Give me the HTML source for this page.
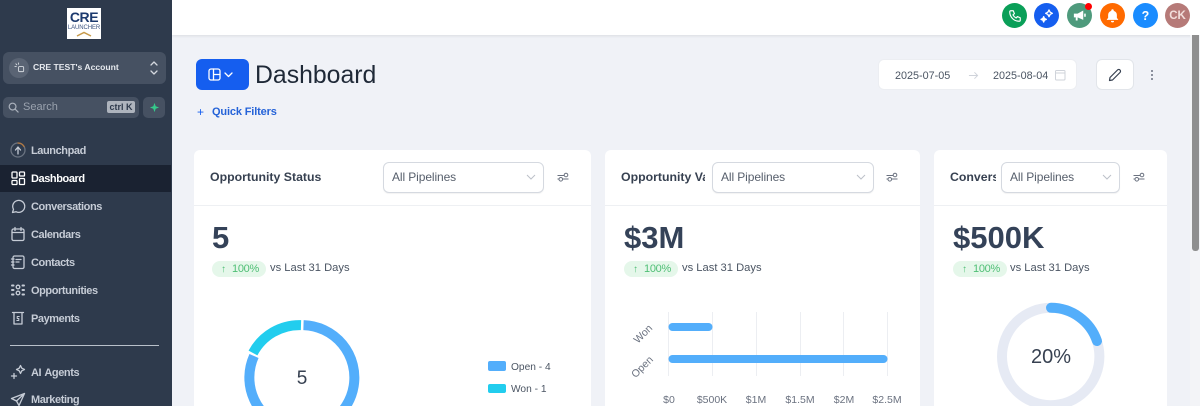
<!DOCTYPE html>
<html><head><meta charset="utf-8"><style>
*{box-sizing:border-box}
html{margin:0;padding:0;width:1200px;height:406px;overflow:hidden}
body{margin:0;padding:0;width:1200px;height:406px;overflow:hidden;position:relative;background:#f0f2f7;font-family:"Liberation Sans",sans-serif;color:#374151}
#wrap{position:absolute;left:0;top:0;width:1200px;height:406px;overflow:hidden;filter:blur(.3px)}
.a{position:absolute;white-space:nowrap}
#side{left:0;top:0;width:172px;height:406px;background:#2e3a4c;overflow:hidden}
.nav{position:absolute;left:31px;font-size:11px;font-weight:700;color:#c6ccd6;line-height:14px;letter-spacing:-.42px;word-spacing:1px}
.ic{position:absolute;left:10px;width:16px;height:16px;fill:none;stroke:#c6ccd6;stroke-width:1.3;stroke-linecap:round;stroke-linejoin:round}
.card{position:absolute;top:150px;height:256px;background:#fff;border-radius:6px 6px 0 0}
.hl{position:absolute;left:0;right:0;top:55px;height:1px;background:#eef0f3}
.ttl{position:absolute;top:20px;font-size:12.3px;font-weight:700;color:#374151;line-height:15px;overflow:hidden;white-space:nowrap}
.sel{position:absolute;top:12px;height:31px;background:#fff;border:1px solid #d5d9e0;border-radius:6px;font-size:12px;letter-spacing:-.1px;color:#565e6b;line-height:29px;padding-left:8px;box-shadow:0 1px 1px rgba(0,0,0,.05)}
.sel svg{position:absolute;right:7px;top:11px}
.cfg{position:absolute;top:21px}
.big{position:absolute;top:71px;font-size:31px;line-height:34px;font-weight:700;color:#344258}
.pill{position:absolute;top:111px;width:54px;height:16px;border-radius:8px;background:#e5f7ea;color:#4fbf75;font-size:11px;letter-spacing:-.3px;line-height:16px;padding-left:9px;white-space:nowrap}
.pill span{font-size:10px;display:inline-block;width:11px}
.vs{position:absolute;top:112px;font-size:11.2px;line-height:13px;color:#4b5563;white-space:nowrap}
.circ{position:absolute;top:3px;width:25px;height:25px;border-radius:50%;display:flex;align-items:center;justify-content:center}
.ax{position:absolute;top:395px;font-size:10.5px;color:#6b7280;line-height:11px;transform:translateX(-50%);white-space:nowrap}
</style></head><body><div id="wrap">

<!-- top bar -->
<div class="a" style="left:172px;top:0;width:1028px;height:35px;background:#fff;box-shadow:0 1px 3px rgba(0,0,0,.09)"></div>
<div class="circ" style="left:1002px;background:#0a9f58"><svg width="14" height="14" viewBox="0 0 24 24" fill="none" stroke="#fff" stroke-width="2" stroke-linecap="round" stroke-linejoin="round"><path d="M5 3h4l2 5-2.500 2a13 13 0 0 0 5.500 5.500L16 13l5 2v4a2 2 0 0 1-2 2A16 16 0 0 1 3 5a2 2 0 0 1 2-2z"/></svg></div>
<div class="circ" style="left:1034px;background:#155eef"><svg width="16" height="16" viewBox="0 0 24 24" fill="none" stroke="#fff" stroke-width="2" stroke-linejoin="round"><path d="M15 3l1.700 3.300L20 8l-3.300 1.700L15 13l-1.700-3.300L10 8l3.300-1.700z"/><path d="M7 13l1.200 2.800L11 17l-2.800 1.200L7 21l-1.200-2.800L3 17l2.800-1.200z" fill="#fff"/></svg></div>
<div class="circ" style="left:1067px;background:#4e9a7c"><svg width="15" height="15" viewBox="0 0 24 24" fill="#fff"><path d="M3 9h6l9-5v15l-9-4v5H6v-5H3z"/><rect x="19.500" y="9" width="2.500" height="5"/></svg></div>
<div class="a" style="left:1085px;top:3px;width:7px;height:7px;border-radius:50%;background:#f00"></div>
<div class="circ" style="left:1100px;background:#ff6a00"><svg width="15" height="15" viewBox="0 0 24 24" fill="#fff"><path d="M12 2a2 2 0 0 1 2 2v.500A7 7 0 0 1 19 11v5l2 2v1H3v-1l2-2v-5a7 7 0 0 1 5-6.500V4a2 2 0 0 1 2-2z"/><path d="M9.500 20.500h5a2.500 2.500 0 0 1-5 0z"/></svg></div>
<div class="circ" style="left:1133px;background:#1a8cff;color:#fff;font-weight:700;font-size:12.5px">?</div>
<div class="circ" style="left:1165px;background:#b67a78;color:#f2dfdc;font-weight:700;font-size:11.5px">CK</div>

<!-- scrollbar -->
<div class="a" style="left:1190px;top:35px;width:10px;height:371px;background:#f3f4f7"></div>
<div class="a" style="left:1192px;top:35px;width:7px;height:216px;background:#8f8f8f;border-radius:0 0 3px 3px"></div>

<!-- sidebar -->
<div class="a" id="side">
  <div class="a" style="left:67px;top:8px;width:34px;height:31px;background:#fff"></div>
  <div class="a" style="left:67px;top:10px;width:34px;text-align:center;font-size:14px;line-height:14px;font-weight:700;color:#1c3a6e;letter-spacing:-.4px">CRE</div>
  <div class="a" style="left:67px;top:25px;width:34px;text-align:center;font-size:6px;line-height:6px;color:#3c5480;letter-spacing:-.1px">LAUNCHER</div>
  <svg class="a" style="left:76px;top:31px" width="16" height="6" viewBox="0 0 16 6"><path d="M1 5 L8 1.500 L15 5" fill="none" stroke="#c79a4b" stroke-width="1.500"/></svg>

  <div class="a" style="left:3px;top:52px;width:163px;height:32px;background:#465162;border-radius:6px"></div>
  <div class="a" style="left:9px;top:58px;width:20px;height:20px;border-radius:50%;background:#5a6474"></div>
  <svg class="a" style="left:14px;top:62px" width="11" height="11" viewBox="0 0 12 12" fill="none" stroke="#d6dae0" stroke-width="1"><rect x="5" y="5" width="5.500" height="5.500" rx="1"/><path d="M2 2l1 1M5 1v1.500M1 5h1.500" stroke-linecap="round"/></svg>
  <div class="a" style="left:33px;top:60px;font-size:8.600px;line-height:14px;font-weight:700;color:#e6e9ee">CRE TEST's Account</div>
  <svg class="a" style="left:149px;top:60px" width="10" height="16" viewBox="0 0 10 16" fill="none" stroke="#d3d7de" stroke-width="1.300" stroke-linecap="round" stroke-linejoin="round"><path d="M2 5l3-3 3 3M2 11l3 3 3-3"/></svg>

  <div class="a" style="left:3px;top:97px;width:136px;height:21px;background:#465162;border-radius:5px"></div>
  <svg class="a" style="left:8px;top:102px" width="11" height="11" viewBox="0 0 12 12" fill="none" stroke="#aab1bc" stroke-width="1.300" stroke-linecap="round"><circle cx="5" cy="5" r="3.700"/><path d="M8 8l3 3"/></svg>
  <div class="a" style="left:23px;top:99px;font-size:11px;line-height:16px;color:#9aa2ae">Search</div>
  <div class="a" style="left:107px;top:101px;width:28px;height:12px;background:#aeb4bd;border-radius:2px;font-size:9px;line-height:12px;text-align:center;color:#2e3a4c;font-weight:700">ctrl K</div>
  <div class="a" style="left:143px;top:97px;width:22px;height:21px;background:#465162;border-radius:5px"></div>
  <svg class="a" style="left:149px;top:102px" width="11" height="11" viewBox="0 0 12 12"><path d="M6 1l1.300 3.700L11 6 7.300 7.300 6 11 4.700 7.300 1 6l3.700-1.300z" fill="#35c98a"/></svg>

  <div class="a" style="left:0;top:165px;width:171px;height:27px;background:#1a2231"></div>

  <svg class="ic" style="top:142px" viewBox="0 0 16 16"><circle cx="8" cy="8" r="7" style="stroke:#6a7381"/><path d="M8 1a7 7 0 0 1 6 3.500" style="stroke:#b5793f"/><path d="M8 12V6M5.500 8L8 5l2.500 3"/></svg>
  <div class="nav" style="top:144px">Launchpad</div>

  <svg class="ic" style="top:170px;stroke:#fff" viewBox="0 0 16 16"><rect x="2" y="2" width="5" height="6" rx=".8"/><rect x="9.500" y="2" width="5" height="4" rx=".8"/><rect x="2" y="10.500" width="5" height="4" rx=".8"/><rect x="9.500" y="8.500" width="5" height="6" rx=".8"/></svg>
  <div class="nav" style="top:172px;color:#fff">Dashboard</div>

  <svg class="ic" style="top:198px" viewBox="0 0 16 16"><path d="M2.500 14.500l1-3.200A6 6 0 1 1 6 13.700z"/></svg>
  <div class="nav" style="top:200px">Conversations</div>

  <svg class="ic" style="top:226px" viewBox="0 0 16 16"><rect x="2" y="3" width="12" height="11.500" rx="1.500"/><path d="M2 6.500h12M5 1.500v3M11 1.500v3"/></svg>
  <div class="nav" style="top:228px">Calendars</div>

  <svg class="ic" style="top:254px" viewBox="0 0 16 16"><rect x="3" y="2" width="11" height="12.500" rx="1.500"/><path d="M6 5.500h5M6 8h3M1.500 5h2.500M1.500 8h2.500M1.500 11h2.500"/></svg>
  <div class="nav" style="top:256px">Contacts</div>

  <svg class="ic" style="top:282px" viewBox="0 0 16 16"><circle cx="8" cy="5" r="1.800"/><circle cx="8" cy="11" r="1.800"/><path d="M2 3.500h1.500M2 8h1.500M2 12.500h1.500M12.500 3.500h1.500M12.500 8h1.500M12.500 12.500h1.500" style="stroke-width:2"/></svg>
  <div class="nav" style="top:284px">Opportunities</div>

  <svg class="ic" style="top:310px" viewBox="0 0 16 16"><path d="M2.500 2.500h11M4 2.500v11.500h8V2.500"/><path d="M9.300 6.500H7.200v2h1.600v2H6.800" style="stroke-width:1"/></svg>
  <div class="nav" style="top:312px">Payments</div>

  <div class="a" style="left:10px;top:345px;width:149px;height:1px;background:#b9c0ca"></div>

  <svg class="ic" style="top:364px" viewBox="0 0 16 16"><path d="M10.500 1.500l1.300 2.700 2.700 1.300-2.700 1.300-1.300 2.700-1.300-2.700-2.700-1.300 2.700-1.300z"/><path d="M4 9.500v5M1.500 12h5"/></svg>
  <div class="nav" style="top:366px">AI Agents</div>

  <svg class="ic" style="top:392px;height:14px" viewBox="0 0 16 14"><path d="M14.500 1.500L1.500 6.500l5 2.500 2.500 4.500zM6.500 9l8-7.500"/></svg>
  <div class="nav" style="top:394px;height:12px;line-height:13px;overflow:hidden">Marketing</div>
</div>

<!-- page head -->
<div class="a" style="left:196px;top:59px;width:53px;height:31px;background:#155eef;border-radius:6px"></div>
<svg class="a" style="left:208px;top:68px" width="30" height="14" viewBox="0 0 30 14" fill="none" stroke="#fff" stroke-width="1.300" stroke-linecap="round" stroke-linejoin="round"><rect x="1" y="1" width="11" height="11" rx="2"/><path d="M5.500 1v11M5.500 6.500H12"/><path d="M17 5l3.500 3.500L24 5"/></svg>
<div class="a" style="left:255px;top:61px;font-size:24.800px;line-height:30px;color:#1f2937">Dashboard</div>
<div class="a" style="left:197px;top:105px;font-size:12px;line-height:15px;color:#155eef">+</div>
<div class="a" style="left:212px;top:105px;font-size:11px;line-height:15px;color:#2563d8;font-weight:700;letter-spacing:-.15px">Quick Filters</div>

<div class="a" style="left:878px;top:59px;width:199px;height:31px;background:#fff;border:1px solid #eceef2;border-radius:6px"></div>
<div class="a" style="left:895px;top:69px;font-size:10.800px;line-height:14px;color:#4b5563">2025-07-05</div>
<svg class="a" style="left:968px;top:70px" width="11" height="11" viewBox="0 0 12 12" fill="none" stroke="#cfd3da" stroke-width="1"><path d="M1 6h9.500M7 2.500L10.500 6 7 9.500"/></svg>
<div class="a" style="left:993px;top:69px;font-size:10.800px;line-height:14px;color:#4b5563">2025-08-04</div>
<svg class="a" style="left:1055px;top:70px" width="11" height="11" viewBox="0 0 11 11" fill="none" stroke="#cfd3da" stroke-width="1"><rect x=".5" y=".5" width="9.500" height="9.500" rx="1"/><path d="M.5 3h9.500"/></svg>

<div class="a" style="left:1096px;top:59px;width:38px;height:31px;background:#fff;border:1px solid #e2e5ea;border-radius:6px"></div>
<svg class="a" style="left:1108px;top:68px" width="14" height="14" viewBox="0 0 14 14" fill="none" stroke="#374151" stroke-width="1.200" stroke-linejoin="round"><path d="M2 9.500L9.500 2a1.400 1.400 0 0 1 2.500 2.500L4.500 12 1.500 12.500z"/></svg>
<svg class="a" style="left:1150px;top:69px" width="4" height="12" viewBox="0 0 4 12" fill="#6b7280"><circle cx="2" cy="2" r="1"/><circle cx="2" cy="6" r="1"/><circle cx="2" cy="10" r="1"/></svg>

<!-- card 1 -->
<div class="card" style="left:194px;width:397px">
  <div class="hl"></div>
  <div class="ttl" style="left:16px;width:130px">Opportunity Status</div>
  <div class="sel" style="left:189px;width:161px">All Pipelines<svg width="10" height="7" viewBox="0 0 10 7" fill="none" stroke="#bcc1c9" stroke-width="1"><path d="M1 1l4 4 4-4"/></svg></div>
  <svg class="cfg" style="left:363px" width="12" height="12" viewBox="0 0 12 12" fill="none" stroke="#6b7280" stroke-width="1"><path d="M.5 4.500h6.500M.5 8h1.500M6 8h5.500"/><circle cx="9" cy="4" r="1.800"/><circle cx="3.800" cy="8.300" r="1.800"/></svg>
  <div class="big" style="left:18px">5</div>
  <div class="pill" style="left:18px"><span>↑</span>100%</div>
  <div class="vs" style="left:76px">vs Last 31 Days</div>
</div>
<svg class="a" style="left:240px;top:315px" width="125" height="91" viewBox="240 315 125 91">
  <path d="M303.500 325.100A52.500 52.500 0 1 1 254 356" fill="none" stroke="#53aefb" stroke-width="10"/>
  <path d="M253 353A52.500 52.500 0 0 1 301 325.100" fill="none" stroke="#22cdee" stroke-width="10"/>
</svg>
<div class="a" style="left:287px;top:367px;width:30px;text-align:center;font-size:19px;line-height:23px;color:#374151">5</div>
<div class="a" style="left:488px;top:361px;width:18px;height:10px;background:#53aefb;border-radius:2px"></div>
<div class="a" style="left:511px;top:361px;font-size:10.200px;line-height:13px;color:#4b5563">Open - 4</div>
<div class="a" style="left:488px;top:384px;width:18px;height:9px;background:#22cdee;border-radius:2px"></div>
<div class="a" style="left:511px;top:383px;font-size:10.200px;line-height:13px;color:#4b5563">Won - 1</div>

<!-- card 2 -->
<div class="card" style="left:605px;width:315px">
  <div class="hl"></div>
  <div class="ttl" style="left:16px;width:84px">Opportunity Value</div>
  <div class="sel" style="left:107px;width:162px">All Pipelines<svg width="10" height="7" viewBox="0 0 10 7" fill="none" stroke="#bcc1c9" stroke-width="1"><path d="M1 1l4 4 4-4"/></svg></div>
  <svg class="cfg" style="left:281px" width="12" height="12" viewBox="0 0 12 12" fill="none" stroke="#6b7280" stroke-width="1"><path d="M.5 4.500h6.500M.5 8h1.500M6 8h5.500"/><circle cx="9" cy="4" r="1.800"/><circle cx="3.800" cy="8.300" r="1.800"/></svg>
  <div class="big" style="left:19px">$3M</div>
  <div class="pill" style="left:19px"><span>↑</span>100%</div>
  <div class="vs" style="left:77px">vs Last 31 Days</div>
</div>
<svg class="a" style="left:660px;top:305px" width="240" height="80" viewBox="660 305 240 80">
  <g stroke="#eceef2" stroke-width="1"><path d="M668.500 312v64M712.500 312v64M756.500 312v64M800.500 312v64M843.500 312v64M887.500 312v64"/></g>
  <rect x="668.500" y="323" width="44" height="8" rx="4" fill="#53aefb"/>
  <rect x="668.500" y="355" width="219" height="8" rx="4" fill="#53aefb"/>
</svg>
<div class="a" style="left:633px;top:328px;font-size:10.500px;line-height:13px;color:#6b7280;transform:rotate(-45deg);transform-origin:center">Won</div>
<div class="a" style="left:630px;top:361px;font-size:10.500px;line-height:13px;color:#6b7280;transform:rotate(-45deg);transform-origin:center">Open</div>
<div class="ax" style="left:669px">$0</div>
<div class="ax" style="left:712px">$500K</div>
<div class="ax" style="left:756px">$1M</div>
<div class="ax" style="left:800px">$1.5M</div>
<div class="ax" style="left:844px">$2M</div>
<div class="ax" style="left:887px">$2.5M</div>

<!-- card 3 -->
<div class="card" style="left:934px;width:233px">
  <div class="hl"></div>
  <div class="ttl" style="left:16px;width:46px">Conversion</div>
  <div class="sel" style="left:67px;width:119px">All Pipelines<svg width="10" height="7" viewBox="0 0 10 7" fill="none" stroke="#bcc1c9" stroke-width="1"><path d="M1 1l4 4 4-4"/></svg></div>
  <svg class="cfg" style="left:199px" width="12" height="12" viewBox="0 0 12 12" fill="none" stroke="#6b7280" stroke-width="1"><path d="M.5 4.500h6.500M.5 8h1.500M6 8h5.500"/><circle cx="9" cy="4" r="1.800"/><circle cx="3.800" cy="8.300" r="1.800"/></svg>
  <div class="big" style="left:19px">$500K</div>
  <div class="pill" style="left:19px"><span>↑</span>100%</div>
  <div class="vs" style="left:76px">vs Last 31 Days</div>
</div>
<svg class="a" style="left:990px;top:296px" width="122" height="110" viewBox="990 296 122 110">
  <circle cx="1050.700" cy="356.500" r="48.700" fill="none" stroke="#e6eaf4" stroke-width="10"/>
  <path d="M1051 307.800A48.700 48.700 0 0 1 1097 341" fill="none" stroke="#53aefb" stroke-width="10" stroke-linecap="round"/>
</svg>
<div class="a" style="left:1021px;top:346px;width:60px;text-align:center;font-size:20px;line-height:23px;color:#374151">20%</div>

</div></body></html>
